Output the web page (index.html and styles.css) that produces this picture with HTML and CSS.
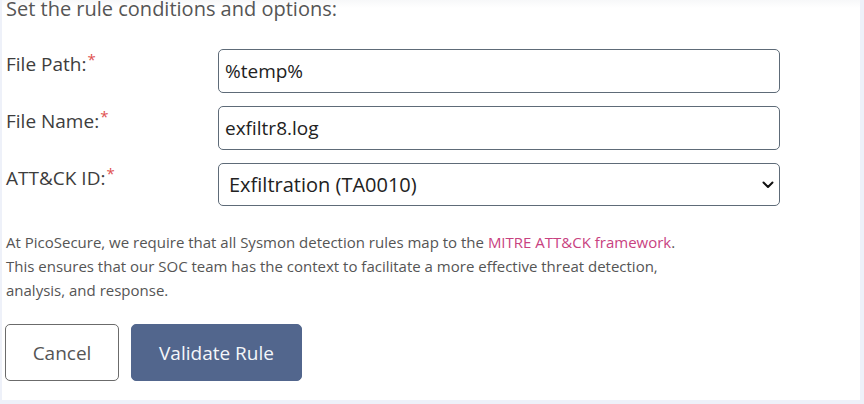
FILE: index.html
```html
<!DOCTYPE html>
<html lang="en">
<head>
<meta charset="utf-8">
<title>Rule conditions</title>
<link rel="stylesheet" href="styles.css">
</head>
<body>
<div class="panel">
  <div class="content">
    <h2 class="heading">Set the rule conditions and options:</h2>
    <form class="form">
      <label class="label" for="path">File Path:<span class="req">*</span></label>
      <input class="field" id="path" type="text" value="%temp%">
      <label class="label" for="name">File Name:<span class="req">*</span></label>
      <input class="field" id="name" type="text" value="exfiltr8.log">
      <label class="label" for="attck">ATT&amp;CK ID:<span class="req">*</span></label>
      <div class="select-wrap">
        <select class="field select" id="attck">
          <option>Exfiltration (TA0010)</option>
        </select>
        <svg class="chev" width="12" height="8" viewBox="0 0 12 8" aria-hidden="true"><path d="M1.5 1.5 L6 6 L10.5 1.5" fill="none" stroke="#111" stroke-width="2" stroke-linecap="round" stroke-linejoin="round"/></svg>
      </div>
    </form>
    <p class="note">At PicoSecure, we require that all Sysmon detection rules map to the <a class="link" href="#">MITRE ATT&amp;CK framework</a>.<br>This ensures that our SOC team has the context to facilitate a more effective threat detection,<br>analysis, and response.</p>
    <div class="actions">
      <button class="btn btn-cancel" type="button">Cancel</button>
      <button class="btn btn-primary" type="button">Validate Rule</button>
    </div>
  </div>
</div>
</body>
</html>
```
FILE: styles.css
```css
html, body {
  margin: 0;
  padding: 0;
  height: 100%;
  overflow: hidden;
}
body {
  background: #eef1f9;
  font-family: "Open Sans", "Noto Sans", sans-serif;
}
.panel {
  margin-left: 2px;
  width: 858px;
  height: 404px;
  background: linear-gradient(to bottom, #f3f4f6 0px, #ffffff 12px);
}
.content {
  padding-left: 4px;
}
.heading {
  margin: -4px 0 0 0;
  font-size: 20px;
  font-weight: 400;
  line-height: 26px;
  color: #555;
}
.form {
  display: grid;
  grid-template-columns: 212px 562px;
  row-gap: 13px;
  margin-top: 27px;
}
.label {
  font-size: 19px;
  line-height: 26px;
  color: #3d3d3d;
  padding-top: 2px;
}
.req {
  color: #e0504f;
  font-size: 15px;
  vertical-align: 6px;
  line-height: 0;
  margin-left: 1px;
}
.field {
  box-sizing: border-box;
  width: 562px;
  height: 44px;
  margin: 0;
  padding: 0 6px;
  border: 1px solid #5e6b78;
  border-radius: 5px;
  background: #fff;
  font-family: "Open Sans", "Noto Sans", sans-serif;
  font-size: 19px;
  color: #222;
  outline: none;
}
.select-wrap {
  position: relative;
  width: 562px;
  height: 43px;
}
.select {
  height: 43px;
  padding-left: 10px;
  font-size: 20px;
  appearance: none;
  -webkit-appearance: none;
}
.chev {
  position: absolute;
  right: 6px;
  top: 18px;
  pointer-events: none;
}
.note {
  margin: 24px 0 0 0;
  font-size: 15px;
  line-height: 24px;
  color: #555;
}
.link {
  color: #c8427f;
  text-decoration: none;
}
.actions {
  display: flex;
  gap: 12px;
  margin-top: 22px;
}
.btn {
  height: 57px;
  border-radius: 5px;
  font-family: "Open Sans", "Noto Sans", sans-serif;
  font-size: 19px;
  padding: 0 25px;
  cursor: pointer;
}
.btn-cancel {
  background: #fff;
  border: 1px solid #6b6b6b;
  color: #555;
  width: 114px;
  margin-left: -1px;
}
.btn-primary {
  background: #52668d;
  border: 1px solid #52668d;
  color: #f4f6fa;
  width: 171px;
}
```
